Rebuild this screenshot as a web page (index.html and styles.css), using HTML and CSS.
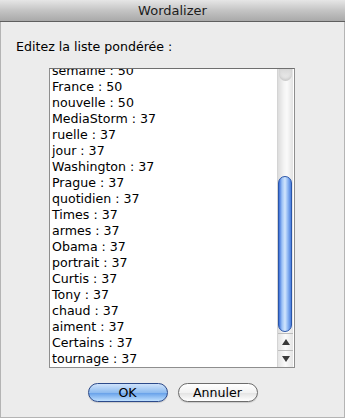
FILE: index.html
```html
<!DOCTYPE html>
<html lang="fr">
<head>
    <meta charset="UTF-8">
    <title>Wordalizer</title>
    <link rel="stylesheet" href="styles.css">
</head>
<body>
<div class="win">
    <div class="title">Wordalizer</div>
    <div class="content">
        <p class="label">Editez la liste pondérée :</p>
        <div class="listbox">
            <div class="view">
                <ul class="words">
                    <li>semaine : 50</li>
                    <li>France : 50</li>
                    <li>nouvelle : 50</li>
                    <li>MediaStorm : 37</li>
                    <li>ruelle : 37</li>
                    <li>jour : 37</li>
                    <li>Washington : 37</li>
                    <li>Prague : 37</li>
                    <li>quotidien : 37</li>
                    <li>Times : 37</li>
                    <li>armes : 37</li>
                    <li>Obama : 37</li>
                    <li>portrait : 37</li>
                    <li>Curtis : 37</li>
                    <li>Tony : 37</li>
                    <li>chaud : 37</li>
                    <li>aiment : 37</li>
                    <li>Certains : 37</li>
                    <li>tournage : 37</li>
                </ul>
            </div>
            <div class="scroll">
                <div class="track">
                    <div class="cap"></div>
                    <div class="thumb"></div>
                </div>
                <div class="arrow up"><span></span></div>
                <div class="arrow down"><span></span></div>
            </div>
        </div>
        <div class="buttons">
            <a href="javascript:;" class="btn ok">OK</a>
            <a href="javascript:;" class="btn">Annuler</a>
        </div>
    </div>
</div>
</body>
</html>
```

FILE: styles.css
```css
body {
    margin: 0;
    font-family: "DejaVu Sans", "Liberation Sans", sans-serif;
    font-size: 12.6px;
    color: #000;
}

ul, li {
    list-style-type: none;
    margin: 0;
    padding: 0;
}

.win {
    width: 345px;
    height: 418px;
    box-sizing: border-box;
    background: #ececec;
    border: 1px solid #b4b4b4;
    border-top: 0;
    display: flex;
    flex-direction: column;
}

.title {
    height: 21px;
    line-height: 22px;
    text-align: center;
    font-size: 13px;
    color: #1c1c1c;
    background: linear-gradient(#e6e6e6, #c4c4c4 50%, #a9a9a9);
    border-bottom: 1px solid #5f5f5f;
    margin: 0 -1px;
}

.content {
    flex: 1;
    display: flex;
    flex-direction: column;
}

.label {
    margin: 17px 0 0 15px;
    height: 16px;
    line-height: 16px;
}

.listbox {
    margin: 13px 0 0 48px;
    width: 246px;
    height: 300px;
    box-sizing: border-box;
    border: 1px solid #8e8e8e;
    border-top-color: #6f6f6f;
    background: #fff;
    display: flex;
}

.view {
    flex: 1;
    overflow: hidden;
}

/* liste défilée : la première ligne est à moitié cachée */
.words {
    margin-top: -6px;
    padding-left: 2px;
}

.words li {
    height: 16px;
    line-height: 16px;
    white-space: nowrap;
}

.scroll {
    width: 15px;
    margin-right: 1px;
    display: flex;
    flex-direction: column;
    border-left: 1px solid #d4d4d4;
    background: linear-gradient(to right, #dcdcdc, #f4f4f4 40%, #fafafa 60%, #e2e2e2);
}

.track {
    flex: 1;
    display: flex;
    flex-direction: column;
    justify-content: space-between;
}

.cap {
    height: 12px;
    margin: 0 1px;
    border-radius: 0 0 7px 7px;
    background: linear-gradient(#d8d8d8, #efefef);
    box-shadow: inset 0 -2px 3px #c8c8c8;
}

.thumb {
    height: 156px;
    margin: 0 1px 1px 0;
    border-radius: 8px;
    border: 1px solid #2a55a8;
    background: linear-gradient(to right, #3b6fd8, #9cc2f6 25%, #d2e6fd 50%, #8ab4f2 75%, #4a7ede);
    box-sizing: border-box;
}

.arrow {
    height: 16px;
    border-top: 1px solid #bdbdbd;
    display: flex;
    align-items: center;
    justify-content: center;
    background: linear-gradient(to right, #e4e4e4, #fbfbfb 50%, #e4e4e4);
}

.arrow span {
    width: 0;
    height: 0;
    border-left: 4px solid transparent;
    border-right: 4px solid transparent;
}

.up span {
    border-bottom: 6px solid #3a3a3a;
}

.down span {
    border-top: 6px solid #3a3a3a;
}

.buttons {
    display: flex;
    justify-content: center;
    gap: 10px;
    margin-top: 15px;
}

.btn {
    width: 80px;
    height: 19px;
    box-sizing: border-box;
    line-height: 17px;
    text-align: center;
    font-size: 12.6px;
    color: #000;
    text-decoration: none;
    border-radius: 10px;
    border: 1px solid #6c6c6c;
    background: linear-gradient(#ffffff, #f2f2f2 50%, #e4e4e4 55%, #ffffff);
    box-shadow: 0 1px 1px rgba(0, 0, 0, 0.15);
}

.btn.ok {
    border-color: #2c4a8a;
    background: linear-gradient(#cfe3fb, #8fbcf0 50%, #6aa3ea 55%, #bfe0ff);
}
```
